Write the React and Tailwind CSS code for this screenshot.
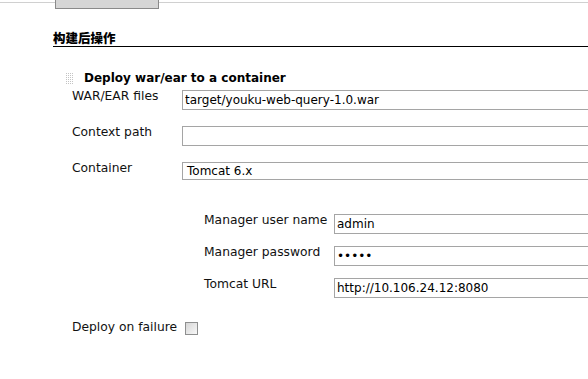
import React from 'react';

function Grip() {
    const dots = [];
    for (let r = 0; r < 6; r++) {
        for (let c = 0; c < 4; c++) {
            dots.push(<rect key={`${r}-${c}`} x={c * 2} y={r * 2} width="1" height="1" fill="#c4c4c4" />);
        }
    }
    return (
        <svg width="8" height="12" viewBox="0 0 8 12" className="block">
            {dots}
        </svg>
    );
}

function TextBox({ value, type = 'text', width }) {
    return (
        <input
            type={type}
            readOnly
            value={value}
            className={`mt-[3px] h-[20px] ${width} shrink-0 border border-[#a5a5a5] bg-white pl-[2px] text-[12px] leading-[18px] text-black outline-none`}
        />
    );
}

function Row({ label, children, labelWidth, className = '' }) {
    return (
        <div className={`flex items-start ${className}`}>
            <div className={`${labelWidth} shrink-0 whitespace-nowrap pt-[2px] text-[12.3px] leading-[15px] text-[#111]`}>{label}</div>
            {children}
        </div>
    );
}

export default function App() {
    return (
        <div className="relative h-[379px] w-[588px] overflow-hidden bg-white font-['DejaVu_Sans',sans-serif]">
            <div className="flex items-start">
                <div className="h-[3px] w-[55px] border-b border-[#d0d0d0]" />
                <div className="h-[9px] w-[104px] border-x border-b border-[#8a8a8a] bg-[#d6d6d6]" />
                <div className="h-[3px] flex-1 border-b border-[#d0d0d0]" />
            </div>

            <div className="mt-[21px] pl-[53px]">
                <div className="border-b border-black font-['Noto_Sans_CJK_SC',sans-serif] text-[12.5px] font-black leading-[16px] text-black">
                    构建后操作
                </div>

                <div className="mt-[23px] flex h-[17px] items-center pl-[13px]">
                    <Grip />
                    <span className="ml-[10px] text-[12px] font-bold leading-[17px] text-black">
                        Deploy war/ear to a container
                    </span>
                </div>

                <div className="pl-[19px]">
                    <Row label="WAR/EAR files" labelWidth="w-[110px]">
                        <TextBox value="target/youku-web-query-1.0.war" width="w-[420px]" />
                    </Row>
                    <Row label="Context path" labelWidth="w-[110px]" className="mt-[13px]">
                        <TextBox value="" width="w-[420px]" />
                    </Row>
                    <Row label="Container" labelWidth="w-[110px]" className="mt-[13px]">
                        <div className="mt-[3px] h-[18px] w-[420px] shrink-0 border border-[#a5a5a5] bg-white pl-[4px] text-[12px] leading-[16px] text-black">
                            Tomcat 6.x
                        </div>
                    </Row>

                    <div className="pl-[132px]">
                        <Row label="Manager user name" labelWidth="w-[130px]" className="mt-[31px]">
                            <TextBox value="admin" width="w-[280px]" />
                        </Row>
                        <Row label="Manager password" labelWidth="w-[130px]" className="mt-[9px]">
                            <TextBox value="admin" type="password" width="w-[280px]" />
                        </Row>
                        <Row label="Tomcat URL" labelWidth="w-[130px]" className="mt-[9px]">
                            <TextBox value="http://10.106.24.12:8080" width="w-[280px]" />
                        </Row>
                    </div>

                    <div className="mt-[20px] flex items-start">
                        <span className="whitespace-nowrap pt-[2px] text-[12.3px] leading-[15px] text-[#111]">Deploy on failure</span>
                        <div className="ml-[8px] mt-[4px] h-[13px] w-[13px] border border-[#8e8f8f] bg-gradient-to-br from-[#d6d6d6] to-[#f8f8f8]" />
                    </div>
                </div>
            </div>
        </div>
    );
}
